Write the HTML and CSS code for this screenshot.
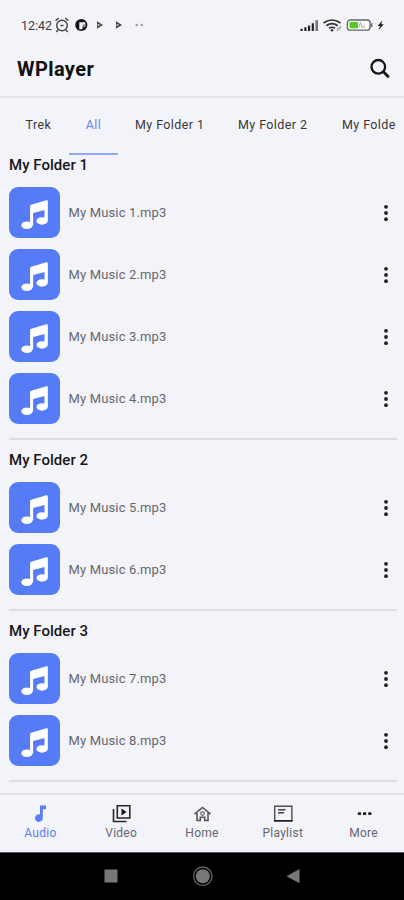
FILE: index.html
```html
<!DOCTYPE html>
<html lang="en">
<head>
<meta charset="utf-8">
<title>WPlayer</title>
<link rel="stylesheet" href="styles.css">
</head>
<body>
<svg width="0" height="0" class="defs">
  <symbol id="note" viewBox="0 0 52 52">
    <path fill="#fff" d="M21.500 19.400Q21.500 18.300 22.600 18L38 13.600Q39.600 13.300 39.600 14.800V34.400H36.200V23.400L24.600 26.500V39H21.500Z"/>
    <ellipse cx="18.300" cy="39" rx="5.700" ry="3.800" fill="#fff"/>
    <ellipse cx="33.700" cy="34.600" rx="5.700" ry="3.800" fill="#fff"/>
  </symbol>
  <symbol id="dots" viewBox="0 0 6 18">
    <circle cx="3" cy="2.800" r="1.900"/><circle cx="3" cy="9" r="1.900"/><circle cx="3" cy="15.200" r="1.900"/>
  </symbol>
</svg>
<div class="status">
  <span class="time">12:42</span>
  <svg class="status-left" width="92" height="18" viewBox="0 0 92 18">
    <g fill="none" stroke="#444" stroke-width="1.400"><circle cx="8" cy="9.500" r="5.300"/><path d="M1.600 4.600 4.800 2M11.200 2l3.200 2.600M4 14l-1.600 2M12 14l1.600 2M6.500 9.500H9.500"/></g>
    <circle cx="27.300" cy="9" r="6.100" fill="#151515"/><path d="M25.300 6.300h6v4.400h-2.800v2.600h-3.200z" fill="#f3f4f9"/><path d="M28.500 8.500h2.800v2.200h-2.800z" fill="#888"/>
    <path d="M43 5.200l6 3.800-6 3.800zM62 5.200l6 3.800-6 3.800z" fill="#444"/><path d="M43.500 8.300h2v1.400h-2zM62.500 8.300h2v1.400h-2z" fill="#ddd"/>
    <circle cx="82.700" cy="9" r="1.200" fill="#999"/><circle cx="87.800" cy="9" r="1.200" fill="#999"/>
  </svg>
  <svg class="status-right" width="86" height="18" viewBox="0 0 86 18">
    <path fill="#222" d="M1.500 12.700h2.200V15H1.500zM5.300 11.200h2.200V15H5.300zM9 9.400h2.200V15H9zM12.700 7.300h2.200V15h-2.200z"/><path fill="#777" d="M16.400 4.200h2.600V15h-2.600z"/>
    <g fill="none" stroke="#333" stroke-width="1.700"><path d="M24.500 7q8.500-6 17 0M27.300 9.800q5.700-4.300 11.400 0M30 12.400q3-2.300 6 0"/></g><circle cx="33" cy="14.200" r="1.300" fill="#333"/><path d="M38 14.500l4-4" stroke="#aaa" stroke-width="2"/>
    <rect x="48.300" y="4" width="22.800" height="10.200" rx="3" fill="#fafafa" stroke="#666" stroke-width="1.300"/><path d="M71.800 7.300h1.500v3.600h-1.500z" fill="#555"/>
    <rect x="50.500" y="6" width="8.500" height="6.200" rx="1" fill="#56c928"/><path d="M59.500 11.500l2-5 2 5.500M64.500 12l1-3" fill="none" stroke="#9db392"/>
    <path fill="#222" d="M83.500 4.200l-5 5.700h2.500L79.500 14l5.400-5.800h-2.700z"/>
  </svg>
</div>
<header class="header">
  <h1>WPlayer</h1>
  <svg width="22" height="22" viewBox="0 0 22 22" fill="none" stroke="#16161c"><circle cx="9.300" cy="9.800" r="6.800" stroke-width="2.300"/><path d="M14.200 14.600l5.600 5.600" stroke-width="2.800"/></svg>
</header>
<nav class="tabs">
  <span class="tab trek">Trek</span><span class="tab active">All</span><span class="tab f1">My Folder 1</span><span class="tab f2">My Folder 2</span><span class="tab f3">My Folde</span>
</nav>
<main class="list">
  <section class="group">
    <h2>My Folder 1</h2>
    <div class="row"><span class="tile"><svg><use href="#note"/></svg></span><span class="name">My Music 1.mp3</span><svg class="more"><use href="#dots"/></svg></div>
    <div class="row"><span class="tile"><svg><use href="#note"/></svg></span><span class="name">My Music 2.mp3</span><svg class="more"><use href="#dots"/></svg></div>
    <div class="row"><span class="tile"><svg><use href="#note"/></svg></span><span class="name">My Music 3.mp3</span><svg class="more"><use href="#dots"/></svg></div>
    <div class="row"><span class="tile"><svg><use href="#note"/></svg></span><span class="name">My Music 4.mp3</span><svg class="more"><use href="#dots"/></svg></div>
  </section>
  <section class="group">
    <h2>My Folder 2</h2>
    <div class="row"><span class="tile"><svg><use href="#note"/></svg></span><span class="name">My Music 5.mp3</span><svg class="more"><use href="#dots"/></svg></div>
    <div class="row"><span class="tile"><svg><use href="#note"/></svg></span><span class="name">My Music 6.mp3</span><svg class="more"><use href="#dots"/></svg></div>
  </section>
  <section class="group">
    <h2>My Folder 3</h2>
    <div class="row"><span class="tile"><svg><use href="#note"/></svg></span><span class="name">My Music 7.mp3</span><svg class="more"><use href="#dots"/></svg></div>
    <div class="row"><span class="tile"><svg><use href="#note"/></svg></span><span class="name">My Music 8.mp3</span><svg class="more"><use href="#dots"/></svg></div>
  </section>
</main>
<nav class="bottom">
  <div class="item on"><svg viewBox="0 0 20 20"><path fill="currentColor" d="M10 1.500h6v3.700h-3.200v8.600a3.900 3.900 0 1 1-2.800-3.500z"/></svg><span>Audio</span></div>
  <div class="item"><svg viewBox="0 0 20 20"><path d="M6.300 1.800h12.500v12.200H6.300zM2.500 5v12.500h13" fill="none" stroke="#25252a" stroke-width="1.600"/><path d="M10.500 4.500v7l5-3.500z" fill="#111"/></svg><span>Video</span></div>
  <div class="item"><svg viewBox="0 0 20 20"><path d="M2.500 10.200l8-6.700 8 6.700M5 9v7.500h3.300v-3.300h4.400v3.300H16V9" fill="none" stroke="#55565b" stroke-width="1.600"/><circle cx="10.500" cy="9.600" r="1.800" fill="none" stroke="#666" stroke-width="1.200"/></svg><span>Home</span></div>
  <div class="item"><svg viewBox="0 0 20 20"><path d="M1.700 2.300h17.200v14.500H1.700z" fill="none" stroke="#4a4b50" stroke-width="1.400"/><path d="M1 16.800h18.500" stroke="#222" stroke-width="1.600"/><path d="M5 5.800h7.500M5 8.800h6" stroke="#444" stroke-width="1.400"/></svg><span>Playlist</span></div>
  <div class="item"><svg viewBox="0 0 20 20" fill="#161616"><rect x="3.700" y="8.200" width="3.400" height="2.900" rx="1"/><rect x="8.900" y="8.200" width="3.400" height="2.900" rx="1"/><rect x="14.100" y="8.200" width="3.400" height="2.900" rx="1"/></svg><span>More</span></div>
</nav>
<div class="system">
  <svg width="202" height="22" viewBox="0 0 202 22"><rect x="3.500" y="3.500" width="13" height="13" fill="#777"/><circle cx="101.800" cy="10.200" r="9.200" fill="none" stroke="#666" stroke-width="1.300"/><circle cx="101.800" cy="10.200" r="7" fill="#777"/><path d="M185.500 10.300l13-7.300v14.300z" fill="#777"/></svg>
</div>
</body>
</html>
```
FILE: styles.css
```css
* { box-sizing: border-box; }
body {
  margin: 0;
  width: 404px;
  height: 900px;
  overflow: hidden;
  display: flex;
  flex-direction: column;
  background: #f3f4f9;
  color: #161619;
  font-family: Roboto, "Liberation Sans", sans-serif;
}
.defs { display: none; }
.status { height: 42px; padding: 8px 19px 0 21px; display: flex; align-items: center; flex: none; }
.time { width: 33px; font-size: 12.500px; color: #3c3c40; white-space: nowrap; }
.status-right { margin-left: auto; }
.header {
  height: 56px;
  flex: none;
  padding: 0 13px 0 17px;
  display: flex;
  align-items: center;
  justify-content: space-between;
  border-bottom: 2px solid #e2e4e9;
}
h1 { margin: 0; font-size: 20px; line-height: 24px; font-weight: 700; letter-spacing: 0.4px; color: #101013; }
.header svg { margin-bottom: 2px; }
.tabs { height: 58px; flex: none; display: flex; white-space: nowrap; font-size: 12.500px; letter-spacing: 0.4px; line-height: 54px; color: #37373b; overflow: hidden; }
.tab { flex: none; }
.trek { width: 69px; padding-left: 25.500px; }
.active { width: 49px; height: 57px; text-align: center; color: #6584f2; border-bottom: 2px solid #91a7f2; }
.f1 { width: 120px; padding-left: 17px; }
.f2 { width: 104px; }
.list { flex: none; height: 637px; padding: 0 7px 0 9px; overflow: hidden; }
.group { padding: 11px 0 14px; border-bottom: 2px solid #dcdee2; }
.group:first-child { padding-top: 0; }
h2 { margin: 0 0 13px; font-size: 15px; line-height: 18px; font-weight: 500; letter-spacing: 0.04px; }
.row { height: 51px; display: flex; align-items: center; }
.row + .row { margin-top: 11px; }
.tile { width: 51px; height: 51px; border-radius: 9px; background: #557bf6; flex: none; }
.tile svg { width: 51px; height: 51px; display: block; }
.name { margin-left: 8.500px; font-size: 13px; letter-spacing: 0.15px; color: #66676c; }
.more { width: 6px; height: 18px; margin-left: auto; margin-right: 8px; fill: #202024; }
.bottom {
  height: 59px;
  flex: none;
  display: flex;
  border-top: 2px solid #e2e3e8;
}
.item { flex: 1; display: flex; flex-direction: column; align-items: center; padding-top: 9px; font-size: 12px; letter-spacing: 0.25px; line-height: 18px; color: #66676c; }
.item svg { width: 20px; height: 20px; }
.item.on { color: #5c7df4; }
.system { flex: 1; background: #000; border-top: 1px solid #55565a; display: flex; align-items: center; justify-content: center; }
```
